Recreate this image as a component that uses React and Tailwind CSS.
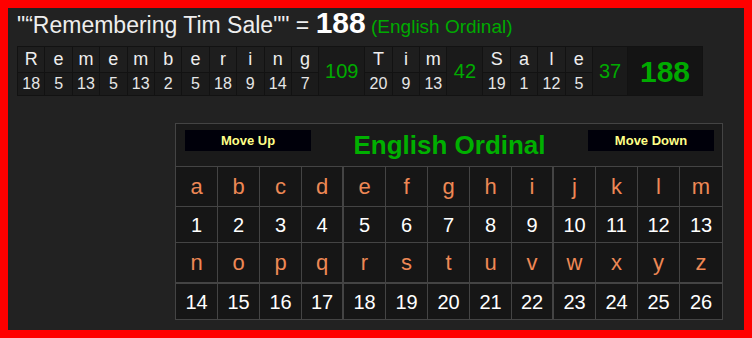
import React from "react";

const words = [
  { w: "Remembering", t: 109 },
  { w: "Tim", t: 42 },
  { w: "Sale", t: 37 },
];

const val = (c) => c.toLowerCase().charCodeAt(0) - 96;

const letters = "abcdefghijklmnopqrstuvwxyz".split("");

function GridCell({ children, idx, row }) {
  const col = idx % 13;
  const classes = ["flex items-center justify-center bg-[#161616] border-[#444]"];
  if (col !== 12) classes.push(col === 3 || col === 8 ? "border-r-2" : "border-r");
  if (row === 0) classes.push("border-b h-[40px]");
  if (row === 1) classes.push("border-b h-[36px]");
  if (row === 2) classes.push("border-b-2 h-[41px]");
  if (row === 3) classes.push("h-[35px]");
  return <div className={classes.join(" ")}>{children}</div>;
}

export default function App() {
  const rows = [letters.slice(0, 13), letters.slice(13)];
  return (
    <div
      className="w-[752px] h-[338px] border-8 border-[#ff0000] bg-[#222222] box-border overflow-hidden"
      style={{ fontFamily: '"Liberation Sans", Arial, sans-serif' }}
    >
      <div className="ml-[9px] mt-[2px] h-[26px] text-[23px] leading-[26px] text-[#eeeeee] whitespace-nowrap">
        <span>"“Remembering Tim Sale""</span>
        <span> = </span>
        <span className="font-bold text-[30px] text-white">188</span>
        <span className="text-[19px] text-[#00aa00]"> (English Ordinal)</span>
      </div>

      <div className="ml-[9px] mt-[10px] flex w-fit border border-[#121212] bg-[#121212]">
        {words.map((wd, wi) => (
          <React.Fragment key={wi}>
            {wd.w.split("").map((c, ci) => (
              <div key={ci} className="flex flex-col w-[27.4px] border-r border-[#121212]">
                <div className="h-[26px] border-b border-[#121212] bg-[#1e1e1e] flex items-center justify-center text-[18px] text-[#eeeeee]">
                  {c}
                </div>
                <div className="h-[22px] bg-[#1b1b1b] flex items-center justify-center text-[16px] text-[#e6e6e6]">
                  {val(c)}
                </div>
              </div>
            ))}
            <div
              className={
                "flex items-center justify-center bg-[#1a1a1a] text-[20px] text-[#00aa00] border-r border-[#121212] " +
                (wi === 0 ? "w-[46px]" : wi === 1 ? "w-[36px]" : "w-[35px]")
              }
            >
              {wd.t}
            </div>
          </React.Fragment>
        ))}
        <div className="w-[74px] flex items-center justify-center bg-[#141414] text-[30px] font-bold text-[#00aa00]">
          188
        </div>
      </div>

      <div className="ml-[167px] mt-[27px] w-[548px] border border-[#444] bg-[#1a1a1a]">
        <div className="h-[43px] border-b border-[#444] flex items-start justify-between pl-[9px] pr-[8px]">
          <div className="mt-[6px] w-[126px] h-[21px] bg-[#00000a] flex items-center justify-center text-[13px] font-bold text-[#ffff88]">
            Move Up
          </div>
          <div className="mt-[8px] text-[26px] leading-[26px] font-bold text-[#00b000]">English Ordinal</div>
          <div className="mt-[6px] w-[126px] h-[21px] bg-[#00000a] flex items-center justify-center text-[13px] font-bold text-[#ffff88]">
            Move Down
          </div>
        </div>
        <div className="grid grid-cols-13">
          {rows.map((r, ri) => (
            <React.Fragment key={ri}>
              {r.map((c, i) => (
                <GridCell key={"l" + i} idx={i} row={ri * 2}>
                  <span className="text-[22px] text-[#ee8855]">{c}</span>
                </GridCell>
              ))}
              {r.map((c, i) => (
                <GridCell key={"n" + i} idx={i} row={ri * 2 + 1}>
                  <span className="text-[20px] text-white">{val(c)}</span>
                </GridCell>
              ))}
            </React.Fragment>
          ))}
        </div>
      </div>
    </div>
  );
}
